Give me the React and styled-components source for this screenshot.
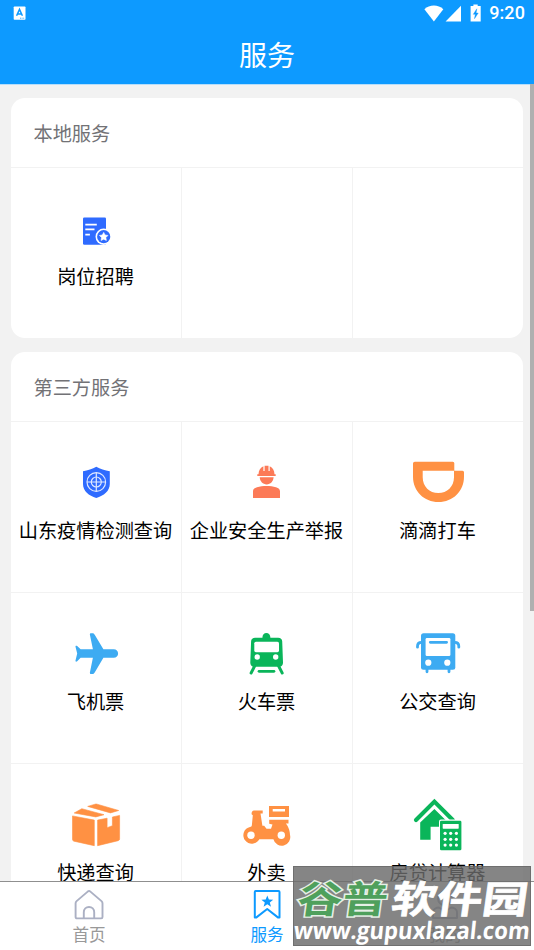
import React from 'react';
import styled, { createGlobalStyle } from 'styled-components';

const GlobalStyle = createGlobalStyle`
  * {
    box-sizing: border-box;
  }
  body {
    margin: 0;
    overflow: hidden;
    font-family: 'Noto Sans CJK SC', sans-serif;
  }
`;

const BLUE = '#0d9aff';

const Screen = styled.div`
  position: relative;
  display: flex;
  flex-direction: column;
  width: 534px;
  height: 950px;
  overflow: hidden;
  background: #f2f2f2;
`;

const Header = styled.header`
  flex: none;
  height: 84px;
  background: ${BLUE};
  color: #fff;
`;

const StatusBar = styled.div`
  display: flex;
  align-items: center;
  justify-content: space-between;
  height: 26px;
  padding: 0 9px 0 13px;

  svg {
    display: block;
  }
`;

const StatusRight = styled.div`
  display: flex;
  align-items: center;
  gap: 8px;
`;

const Clock = styled.span`
  font-family: Roboto, sans-serif;
  font-size: 18px;
  font-weight: 500;
  line-height: 28px;
  letter-spacing: 0.1px;
`;

const Title = styled.h1`
  margin: 0;
  font-size: 28px;
  font-weight: 400;
  line-height: 56px;
  text-align: center;
`;

const Content = styled.main`
  position: relative;
  display: flex;
  flex: 1;
  flex-direction: column;
  gap: 14px;
  min-height: 0;
  padding: 14px 11px 0;
  overflow: hidden;
  box-shadow: inset 0 1px 0 #b6defb;
`;

const ScrollThumb = styled.div`
  position: absolute;
  top: 0;
  right: 0;
  width: 4px;
  height: 527px;
  background: #b0b0b0;
`;

const Card = styled.section`
  flex: none;
  overflow: hidden;
  background: #fff;
  border-radius: 14px;
`;

const CardTitle = styled.h2`
  height: 69px;
  margin: 0;
  padding-left: 22.5px;
  color: #727276;
  font-size: 19.2px;
  font-weight: 400;
  line-height: 71px;
`;

const Grid = styled.div`
  display: grid;
  grid-template-columns: 171px 171px 170px;
  grid-auto-rows: 171px;
`;

const Cell = styled.div`
  display: flex;
  flex-direction: column;
  align-items: center;
  padding-top: 30px;
  border-top: 1px solid #f2f2f2;
  border-right: ${props => (props.$last ? 'none' : '1px solid #f2f2f2')};

  svg {
    display: block;
    flex: none;
  }
`;

const Label = styled.span`
  margin-top: 3px;
  padding-right: 1px;
  color: #000;
  font-size: 19.2px;
  line-height: 30px;
  white-space: nowrap;
`;

const TabBar = styled.nav`
  display: grid;
  flex: none;
  grid-template-columns: repeat(3, 1fr);
  height: 69px;
  border-top: 1px solid #8f8f8f;
  background: #fff;
`;

const Tab = styled.div`
  display: flex;
  flex-direction: column;
  align-items: center;
  padding-top: 7px;
  color: ${props => (props.$active ? BLUE : '#999')};
  font-size: 16.6px;
  line-height: 24px;

  svg {
    display: block;
    margin-bottom: 1px;
  }
`;

const Watermark = styled.div`
  position: absolute;
  right: 3px;
  bottom: 4px;
  width: 238px;
  height: 80px;
  background: rgba(106, 106, 106, 0.82);
  border: 1px solid rgba(90, 90, 90, 0.5);

  svg {
    display: block;
    margin: -1px;
    overflow: visible;
  }
`;

const Icon = ({ color, children }) => (
  <svg width='60' height='60' viewBox='0 0 60 60' fill={color}>
    {children}
  </svg>
);

const JobIcon = () => (
  <Icon color='#2f6bff'>
    <rect x='17' y='19.5' width='23' height='27.3' rx='1.3' />
    <path d='M19.3 26.7h11.5M19.3 31.4h9.2M19.3 36.7h4.6' stroke='#fff' strokeWidth='1.8' />
    <circle cx='37.7' cy='38.7' r='8.2' fill='#fff' />
    <circle cx='37.7' cy='38.7' r='6.6' />
    <path d='M37.7 34.4l1.35 2.6 2.9.45-2.05 2.1.45 2.9-2.65-1.3-2.65 1.3.45-2.9-2.05-2.1 2.9-.45z' fill='#fff' stroke='#fff' strokeWidth='.6' strokeLinejoin='round' />
  </Icon>
);

const ShieldIcon = () => (
  <Icon color='#2f6bff'>
    <path d='M30.3 14.8C34 17 39 18.7 43.8 19.2V32c0 7-6 11.7-13.5 14C22.8 43.7 17 39 17 32V19.2C21.6 18.7 26.6 17 30.3 14.8z' />
    <g fill='none' stroke='#dfe8ff' strokeWidth='1.2'>
      <circle cx='30.3' cy='30' r='9.3' />
      <circle cx='30.3' cy='30' r='5' />
      <path d='M21 30h18.6M30.3 20.7v18.6' />
    </g>
  </Icon>
);

const WorkerIcon = () => (
  <Icon color='#fc7a57'>
    <path d='M20.3 24v-1.8h1.2c.1-4 2-6.700 4.900-7.900v4.600h1.200v-5.200h3.900v5.200h1.200v-4.600c2.900 1.200 4.700 3.900 4.800 7.900h1.200V24z' />
    <path d='M22.700 25.300h13.900c-.3 4.200-3.100 7.100-6.900 7.100s-6.700-2.900-7-7.100z' />
    <path d='M16 46v-6.500c0-2.300 1.400-3.500 4-4.300 5.500-1.700 13.500-1.700 19 0 2.600.8 4 2 4 4.300V46z' />
  </Icon>
);

const DidiIcon = () => (
  <Icon color='#ff9143'>
    <path d='M6.8 9.700h38a1.500 1.500 0 0 1 1.500 1.500v7.500h8.200a1.500 1.500 0 0 1 1.500 1.500v4.500C56 39 45 50 30.500 50S5 39 5 24.700V11.500a1.800 1.800 0 0 1 1.800-1.800zM14.700 18.700v6.500C14.700 34.500 21.500 41 30.300 41S46 34.500 46 25.200v-6.500z' fillRule='evenodd' />
  </Icon>
);

const PlaneIcon = () => (
  <Icon color='#3dabf2'>
    <path d='M26.600 10.300c1 0 1.600.6 2.100 1.500l8.700 14.500h10.300c2.600 0 4.400 1.700 4.400 4.200s-1.800 4.200-4.400 4.200H37.400l-8.700 14.700c-.5.9-1.100 1.500-2.100 1.500h-1.700c-.8 0-1.200-.6-1-1.500l3-14.700H14.600l-3.400 3.500c-1 .9-1.900.5-1.700-.7l1.700-7-1.700-6.700c-.2-1.100.8-1.500 1.700-.7l3.400 3.200h12.300l-3-14.500c-.2-.9.2-1.500 1-1.500z' />
  </Icon>
);

const TrainIcon = () => (
  <Icon color='#0ab55a'>
    <path d='M25.400 14.700c0-2.700 1.700-4.700 4-4.700s4 2 4 4.700h7.800c2.300 0 3.900 1.300 4 3.600l.8 21.200c.1 2.300-1.200 4.200-3.500 4.200H16.800c-2.300 0-3.600-1.900-3.500-4.200l.8-21.200c.1-2.300 1.700-3.600 4-3.600z' />
    <rect x='17.300' y='18.700' width='24.700' height='10.500' rx='1.600' fill='#fff' />
    <circle cx='20.200' cy='34' r='2.700' fill='#fff' />
    <circle cx='38.700' cy='34' r='2.700' fill='#fff' />
    <path d='M17.700 43l-3.600 7M41.600 43l3.600 7' stroke='#0ab55a' strokeWidth='2.900' strokeLinecap='round' />
    <path d='M22 48.300h15' stroke='#0ab55a' strokeWidth='2.700' strokeLinecap='round' />
  </Icon>
);

const BusIcon = () => (
  <Icon color='#3dabf2'>
    <rect x='13' y='10.300' width='34.300' height='36.500' rx='2.500' />
    <rect x='17.600' y='15' width='24.800' height='18' rx='1.300' fill='#fff' />
    <path d='M22.300 19.300h16.300M19 46v2.800M41 46v2.800' stroke='#3dabf2' strokeWidth='2.800' strokeLinecap='round' />
    <path d='M13.500 19.300c-2.700 0-4 1.300-4 4v.9M46.800 19.300c2.700 0 4 1.300 4 4v.9' fill='none' stroke='#3dabf2' strokeWidth='2.800' strokeLinecap='round' />
    <circle cx='20.300' cy='39.700' r='3.100' fill='#fff' />
    <circle cx='39.300' cy='39.700' r='3.100' fill='#fff' />
  </Icon>
);

const ParcelIcon = () => (
  <Icon color='#ff9143'>
    <g stroke='#ff9143' strokeWidth='.6' strokeLinejoin='round'>
      <path d='M6.500 21.900l21.800 4.200v25.600L8 47.200c-1-.3-1.500-.9-1.500-1.900z' />
      <path d='M31.600 26.100l9.500-1.900v9.500l5.300-2v-8.700l7.200-1.600v23.400c0 1-.5 1.600-1.500 1.900l-20.500 5z' />
      <path d='M8.200 19l7.600-4.300 22.200 6-8.200 2.200z' />
      <path d='M21.700 12.400l7.400-2.200c.7-.2 1.300-.2 2 0l21.600 6.300-8.200 2.400z' />
    </g>
  </Icon>
);

const ScooterIcon = () => (
  <Icon color='#ff9143'>
    <path d='M17 16.400h8.700v3h-2.200l1.900 12.300h1.800l2.300 3h4.500l1.500-4.200-3.300-.8v-4h19.300v3.700h-2.700c1.700 2 4.200 6 4.200 11.600a8.500 8.500 0 0 1-16.600 4.300H22.300A8.500 8.500 0 1 1 13 32.900c1.200 0 1.800-.8 1.900-2l.9-9.600-1.200-1c-.2-2.300.7-3.700 2.400-3.900z' />
    <circle cx='14' cy='41.200' r='3.700' fill='#fff' />
    <circle cx='44.300' cy='41.200' r='3.700' fill='#fff' />
    <path d='M32 12h20v11H32zM35.700 14.900v2.600H48v-2.600z' fillRule='evenodd' />
  </Icon>
);

const LoanIcon = () => (
  <Icon color='#0ab55a'>
    <path d='M8 26L26.400 7.600 44.800 26' fill='none' stroke='#0ab55a' strokeWidth='4.200' strokeLinecap='round' />
    <path d='M26.400 14.900L38.600 27v5.700h-16v13H12.200V28.600z' />
    <rect x='31' y='25.600' width='23.500' height='31.600' rx='2' fill='#fff' />
    <rect x='32' y='26.700' width='21.400' height='29.600' rx='1.300' />
    <rect x='34.700' y='30' width='16' height='4.700' rx='.6' fill='#fff' />
    {[39.3, 45.3, 51.1].map(cy =>
      [37.1, 42.7, 48.4].map(cx => <circle key={cx + '-' + cy} cx={cx} cy={cy} r='1.600' fill='#fff' />)
    )}
  </Icon>
);

const HomeTabIcon = () => (
  <svg width='32' height='32' viewBox='0 0 32 32' fill='none' stroke='#abb0c3' strokeWidth='1.900' strokeLinejoin='round'>
    <path d='M2.600 14.200c0-.9.300-1.500 1-2.100L14.700 2.600c.9-.7 1.900-.7 2.700 0l11.100 9.500c.6.600 1 1.200 1 2.100v13.900c0 .8-.5 1.300-1.300 1.300H3.900c-.8 0-1.300-.5-1.300-1.300z' />
    <path d='M10.800 29.400v-6.100c0-3.200 2.200-5.300 5.200-5.300s5.200 2.100 5.200 5.300v6.100' />
  </svg>
);

const ServiceTabIcon = () => (
  <svg width='32' height='32' viewBox='0 0 32 32' fill='none' stroke={BLUE} strokeWidth='2' strokeLinejoin='round'>
    <path d='M4.700 2h22.800c.7 0 1 .4 1 1v25.600h-1.300l-11-8.600-11.100 8.600H3.800V3c0-.6.300-1 .9-1z' />
    <path d='M16.300 6.600l1.600 4 4.300.2-3.400 2.700 1.200 4.200-3.700-2.400-3.700 2.400 1.200-4.200-3.400-2.700 4.300-.2z' fill={BLUE} stroke='none' />
  </svg>
);

const MineTabIcon = () => (
  <svg width='32' height='32' viewBox='0 0 32 32' fill='none' stroke='#abb0c3' strokeWidth='1.900' strokeLinejoin='round'>
    <circle cx='16' cy='9.500' r='7' />
    <path d='M4 29v-6c0-2.500 3-4.500 6-4.500l6 4 6-4c3 0 6 2 6 4.500v6z' />
  </svg>
);

const localServices = [
  { name: '岗位招聘', icon: JobIcon },
  {},
  {}
];

const thirdPartyServices = [
  { name: '山东疫情检测查询', icon: ShieldIcon },
  { name: '企业安全生产举报', icon: WorkerIcon },
  { name: '滴滴打车', icon: DidiIcon },
  { name: '飞机票', icon: PlaneIcon },
  { name: '火车票', icon: TrainIcon },
  { name: '公交查询', icon: BusIcon },
  { name: '快递查询', icon: ParcelIcon },
  { name: '外卖', icon: ScooterIcon },
  { name: '房贷计算器', icon: LoanIcon }
];

const tabs = [
  { name: '首页', icon: HomeTabIcon },
  { name: '服务', icon: ServiceTabIcon, active: true },
  { name: '我的', icon: MineTabIcon }
];

const ServiceCard = ({ title, items }) => (
  <Card>
    <CardTitle>{title}</CardTitle>
    <Grid>
      {items.map(({ name, icon: ItemIcon }, i) => (
        <Cell key={i} $last={i % 3 === 2}>
          {ItemIcon && <ItemIcon />}
          {name && <Label>{name}</Label>}
        </Cell>
      ))}
    </Grid>
  </Card>
);

const App = () => (
  <>
    <GlobalStyle />
    <Screen>
      <Header>
        <StatusBar>
          <svg width='13' height='14' viewBox='0 0 13 14'>
            <rect x='.7' y='.5' width='11.800' height='13.300' rx='.8' fill='#fff' />
            <path d='M3.600 9.800L6.500 3.400l2.900 6.400M4.700 7.900h3.600' fill='none' stroke={BLUE} strokeWidth='1.500' />
            <path d='M7 12.200h4.500' stroke={BLUE} strokeWidth='.8' strokeDasharray='1 .6' />
          </svg>
          <StatusRight>
            <svg width='58' height='18' viewBox='0 0 58 18' fill='#fff'>
              <path d='M1.400 5.200C6.400.4 15.300.4 20.300 5.200L10.900 17.400z' />
              <path d='M38 1.700V17.400H22.600z' />
              <path d='M50.400.4h4.300V2h3v15.400H47.600V2h2.800z' />
              <path d='M53.800 4.800l-3.500 5.500h2l-.8 4.400 3.700-5.600h-2.100z' fill={BLUE} stroke={BLUE} strokeWidth='.4' />
            </svg>
            <Clock>9:20</Clock>
          </StatusRight>
        </StatusBar>
        <Title>服务</Title>
      </Header>
      <Content>
        <ServiceCard title='本地服务' items={localServices} />
        <ServiceCard title='第三方服务' items={thirdPartyServices} />
        <ScrollThumb />
      </Content>
      <TabBar>
        {tabs.map(({ name, icon: TabIcon, active }) => (
          <Tab key={name} $active={active}>
            <TabIcon />
            {name}
          </Tab>
        ))}
      </TabBar>
      <Watermark>
        <svg width='238' height='80' viewBox='0 0 238 80'>
          <g fontFamily="'Noto Sans CJK SC', sans-serif" fontWeight='700' fontSize='45'>
            <text transform='translate(3 46.500) skewX(-8) scale(1 .84)' textLength='90' fill='#4fa05c' stroke='#e6f0e6' strokeWidth='3.400' paintOrder='stroke' lengthAdjust='spacingAndGlyphs'>谷普</text>
            <text transform='translate(97 46.500) skewX(-8) scale(1 .84)' textLength='136' fill='#fff' stroke='#fff' strokeWidth='.8' lengthAdjust='spacingAndGlyphs'>软件园</text>
          </g>
          <text transform='translate(0 73) skewX(-6)' textLength='236' lengthAdjust='spacingAndGlyphs' fill='#fff' fontFamily="'Open Sans', sans-serif" fontSize='24' fontWeight='700'>www.gupuxlazal.com</text>
        </svg>
      </Watermark>
    </Screen>
  </>
);

export default App;
